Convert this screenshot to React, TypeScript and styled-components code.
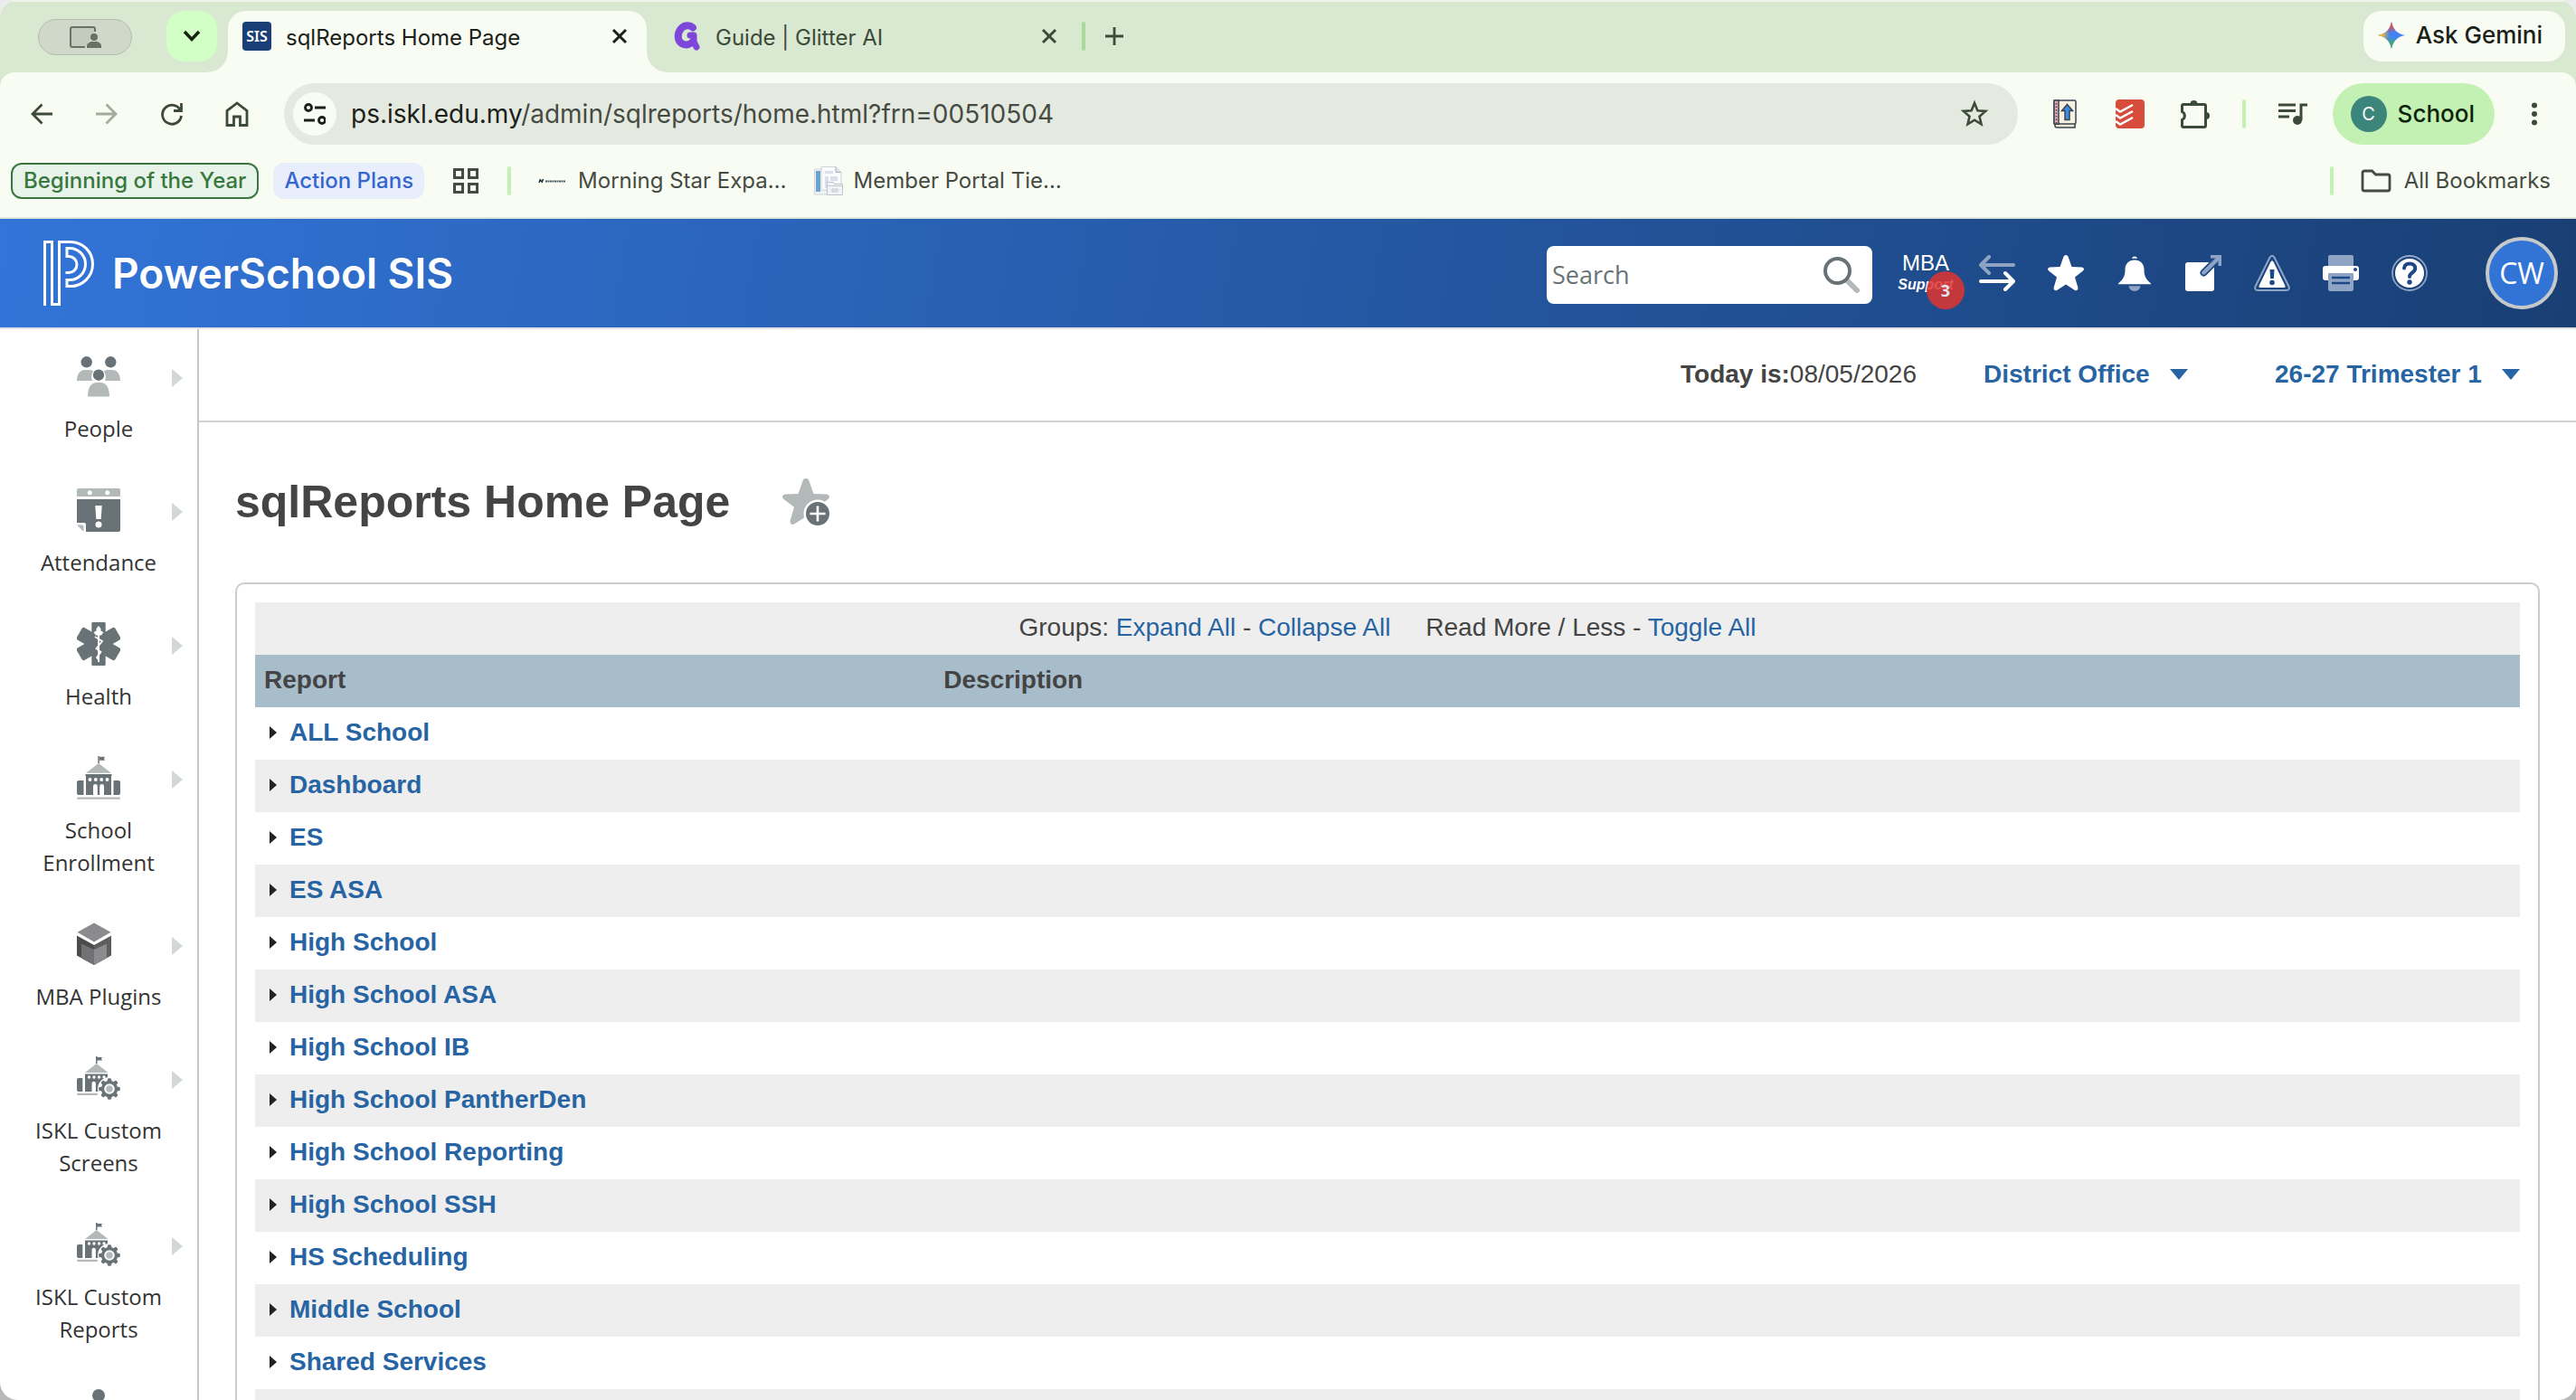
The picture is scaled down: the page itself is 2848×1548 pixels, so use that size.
import React from 'react';
import styled, { createGlobalStyle } from 'styled-components';

const ui = '"Inter", "Liberation Sans", sans-serif';
const arial = '"Liberation Sans", Arial, sans-serif';
const openSans = '"Open Sans", "Noto Sans", sans-serif';
const slate = '#697277';
const mist = '#b3b8b8';
const linkBlue = '#2764a3';
const frame = '#d9e8d1';
const chrome = '#f9fcf3';
const lime = '#c3f1b4';
const ink = '#3c4a3a';

const GlobalStyle = createGlobalStyle`
  * { box-sizing: border-box; }
  html { background: linear-gradient(#ececec, #b9b9b9); }
  body { margin: 0; font-family: ${arial}; }
  button, input, select { font: inherit; color: inherit; border: 0; padding: 0; margin: 0; background: none; }
  a { color: inherit; text-decoration: none; }
  svg { display: block; flex: none; }
`;

const Window = styled.div`
  display: flex;
  flex-direction: column;
  height: 100vh;
  overflow: hidden;
  border-radius: 20px;
  background: #fff;
`;

/* ---------- tab strip ---------- */

const TabStrip = styled.div`
  display: flex;
  flex: none;
  height: 80px;
  padding: 12px 12px 0 42px;
  background: ${frame};
  box-shadow: inset 0 2px 0 #eff4ec;
  font: 400 24px/32px ${ui};
`;

const ProfilePill = styled.button`
  display: flex;
  align-items: center;
  justify-content: center;
  width: 104px;
  height: 40px;
  margin: 9px 38px 0 0;
  border: 1px solid #b2bdac;
  border-radius: 20px;
  background: #d0d8ca;
  color: #697166;
`;

const TabSearch = styled.button`
  display: flex;
  align-items: center;
  justify-content: center;
  width: 56px;
  height: 56px;
  margin-right: 12px;
  border-radius: 20px;
  background: #d1ffc6;
  color: #16210f;
`;

const Tab = styled.div<{ $active?: boolean }>`
  position: relative;
  display: flex;
  align-items: center;
  gap: 16px;
  width: ${p => (p.$active ? '463px' : '481px')};
  padding: ${p => (p.$active ? '0 20px 12px 16px' : '0 26px 12px 30px')};
  border-radius: 20px 20px 0 0;
  background: ${p => (p.$active ? chrome : 'transparent')};
  color: ${p => (p.$active ? '#1b2118' : ink)};

  &::before, &::after {
    content: '';
    display: ${p => (p.$active ? 'block' : 'none')};
    position: absolute;
    bottom: 0;
    width: 22px;
    height: 22px;
  }
  &::before { right: 100%; background: radial-gradient(circle at 0 0, transparent 21px, ${chrome} 22px); }
  &::after { left: 100%; background: radial-gradient(circle at 100% 0, transparent 21px, ${chrome} 22px); }
`;

const TabTitle = styled.span`
  flex: 1;
  padding-top: 3px;
  white-space: nowrap;
`;

const SisIcon = styled.span`
  display: flex;
  align-items: center;
  justify-content: center;
  width: 32px;
  height: 32px;
  border-radius: 4px;
  background: #1a3f76;
  color: #fff;
  font: 600 16px/32px "Noto Sans", sans-serif;
`;

const PlainButton = styled.button`
  display: flex;
  align-items: center;
  justify-content: center;
`;

const Rule = styled.span<{ $color?: string }>`
  flex: none;
  width: 4px;
  height: 32px;
  border-radius: 2px;
  background: ${p => p.$color ?? lime};
`;

const StripRule = styled(Rule)`
  margin-top: 12px;
`;

const NewTab = styled(PlainButton)`
  width: 64px;
  height: 56px;
  color: ${ink};
`;

const Gemini = styled.button`
  display: flex;
  align-items: center;
  gap: 12px;
  height: 56px;
  margin-left: auto;
  padding: 0 25px 2px 16px;
  border-radius: 20px;
  background: ${chrome};
  color: #1b2118;
  font: 500 26px/32px ${ui};
`;

/* ---------- toolbar ---------- */

const ToolbarBack = styled.div`
  flex: none;
  background: ${frame};
`;

const Toolbar = styled.div`
  display: flex;
  align-items: center;
  padding: 12px 10px;
  border-radius: 16px 16px 0 0;
  background: ${chrome};
  color: ${ink};
  font: 400 28px/36px ${ui};
`;

const ToolButton = styled.button<{ $dim?: boolean }>`
  display: flex;
  align-items: center;
  justify-content: center;
  flex: none;
  width: 72px;
  height: 68px;
  opacity: ${p => (p.$dim ? 0.45 : 1)};
`;

const AddressBar = styled.div`
  display: flex;
  flex: 1;
  align-items: center;
  gap: 16px;
  min-width: 0;
  height: 68px;
  margin: 0 16px;
  padding: 0 32px 0 10px;
  border-radius: 34px;
  background: #e5eae0;
`;

const SiteInfo = styled(PlainButton)`
  flex: none;
  width: 48px;
  height: 48px;
  border-radius: 50%;
  background: ${chrome};
  color: #1b2118;
`;

const Url = styled.div`
  flex: 1;
  overflow: hidden;
  color: #454b42;
  white-space: nowrap;

  b { color: #1b2118; font-weight: 400; }
`;

const ToolRule = styled(Rule)`
  margin: 0 16px;
`;

const Profile = styled.button`
  display: flex;
  align-items: center;
  gap: 12px;
  height: 68px;
  margin: 0 8px;
  padding: 0 22px 0 20px;
  border-radius: 34px;
  background: ${lime};
  color: #0d2409;
  font: 500 26px/36px ${ui};
`;

const ProfileDot = styled.span`
  width: 40px;
  border-radius: 50%;
  background: #3b857a;
  color: #fff;
  font: 400 20px/40px ${ui};
`;

/* ---------- bookmarks ---------- */

const Bookmarks = styled.nav`
  display: flex;
  flex: none;
  align-items: center;
  height: 70px;
  padding: 0 28px 12px 12px;
  border-bottom: 2px solid #dde6d8;
  background: ${chrome};
  color: #454b42;
  font: 400 24px/32px ${ui};
`;

const GroupChip = styled.button<{ $open?: boolean }>`
  height: 40px;
  margin-right: 16px;
  padding: 0 12px;
  border: ${p => (p.$open ? '2px solid #38783e' : '0')};
  border-radius: 12px;
  background: ${p => (p.$open ? '#e8f3e9' : '#e9eefd')};
  color: ${p => (p.$open ? '#38783e' : '#3566cf')};
  font: 500 24px/32px ${ui};
  white-space: nowrap;
`;

const AppsButton = styled(PlainButton)`
  width: 60px;
  height: 40px;
  margin-right: 16px;
`;

const Bookmark = styled.a`
  display: flex;
  align-items: center;
  gap: 12px;
  margin-left: 30px;
  white-space: nowrap;
`;

const BookmarkRule = styled(Rule)<{ $push?: boolean }>`
  margin-left: ${p => (p.$push ? 'auto' : '0')};
`;

/* ---------- product header ---------- */

const Header = styled.header`
  display: flex;
  flex: none;
  align-items: center;
  height: 122px;
  padding: 0 20px 0 48px;
  border-bottom: 2px solid #e1e1e6;
  background: linear-gradient(100deg, #3274d8, #193f74);
  color: #fff;
`;

const Brand = styled.a`
  display: flex;
  align-items: center;
  gap: 18px;
  margin-right: auto;
  font: 600 46px/56px ${ui};
  white-space: nowrap;
`;

const SearchBox = styled.label`
  display: flex;
  align-items: center;
  width: 360px;
  height: 64px;
  margin: 4px 24px 0 0;
  padding: 0 14px 0 6px;
  border-radius: 8px;
  background: #fff;
`;

const SearchInput = styled.input`
  flex: 1;
  min-width: 0;
  outline: 0;
  color: ${slate};
  font: 400 27px/36px ${openSans};

  &::placeholder { color: ${slate}; opacity: 1; }
`;

const HeaderButton = styled.button`
  position: relative;
  display: flex;
  flex-direction: column;
  align-items: center;
  justify-content: center;
  width: 76px;
  height: 80px;
`;

const SupportButton = styled(HeaderButton)`
  padding-right: 6px;
`;

const MbaTop = styled.span`
  font: 400 24px/26px ${arial};
`;

const MbaBottom = styled.span`
  font: italic 700 16px/22px ${arial};
`;

const Badge = styled.span`
  position: absolute;
  right: -2px;
  bottom: 0;
  width: 42px;
  border-radius: 50%;
  background: rgba(222, 54, 48, 0.86);
  color: #dfe6f2;
  font: 700 18px/42px ${openSans};
`;

const Avatar = styled.button`
  width: 80px;
  height: 80px;
  margin-left: 46px;
  border: 4px solid #c6c9ca;
  border-radius: 50%;
  background: #3273d6;
  color: #fff;
  font: 400 32px/72px ${openSans};
`;

/* ---------- page ---------- */

const Body = styled.div`
  display: flex;
  flex: 1;
  min-height: 0;
`;

const Sidebar = styled.nav`
  flex: none;
  width: 220px;
  overflow: hidden;
  border-right: 2px solid #c3c7c8;
`;

const NavItem = styled.a`
  display: grid;
  grid-template-columns: 1fr 48px 1fr;
  align-items: center;
  padding: 28px 16px 20px;
  color: #333;
  font: 400 24px/36px ${openSans};
  text-align: center;
`;

const NavIcon = styled.span`
  grid-column: 2;
  height: 48px;
`;

const NavArrow = styled.span`
  justify-self: end;
  width: 0;
  margin-top: 4px;
  border: 10px solid transparent;
  border-left: 12px solid #d3d7d8;
  border-right: 0;
`;

const NavLabel = styled.span`
  grid-column: 1 / -1;
  padding-top: 16px;
`;

const Main = styled.main`
  flex: 1;
  min-width: 0;
  overflow: hidden;
  color: #444;
`;

const ContextBar = styled.div`
  display: flex;
  align-items: center;
  justify-content: flex-end;
  height: 103px;
  padding: 0 62px 2px 40px;
  border-bottom: 2px solid #d2d4d4;
  font: 400 28px/36px ${arial};
`;

const Picker = styled.label<{ $gap: number }>`
  display: grid;
  align-items: center;
  margin-left: ${p => p.$gap}px;
  color: ${linkBlue};

  select, svg { grid-area: 1 / 1; }
  svg { justify-self: end; pointer-events: none; }
`;

const PickerSelect = styled.select`
  appearance: none;
  padding-right: 42px;
  font-weight: 700;
`;

const Content = styled.section`
  padding: 58px 40px 0;
`;

const TitleRow = styled.div`
  display: flex;
  align-items: center;
  gap: 58px;
  height: 60px;
  margin-bottom: 59px;
`;

const Title = styled.h1`
  margin: 0;
  font: 700 50px/60px ${arial};
`;

const Panel = styled.div`
  padding: 20px;
  border: 2px solid #ccc;
  border-radius: 10px;
`;

const ReportTable = styled.table`
  width: 100%;
  border-collapse: collapse;
  table-layout: fixed;
  font: 400 28px/36px ${arial};
  text-align: left;

  col:first-child { width: 30%; }
`;

const Row = styled.tr<{ $tone?: 'gray' | 'head' }>`
  height: 58px;
  background: ${p => (p.$tone === 'gray' ? '#eee' : p.$tone === 'head' ? '#a8bdca' : '#fff')};
`;

const HeadCell = styled.th`
  padding: 0 10px 2px;
`;

const Cell = styled.td`
  padding: 0 16px 2px;
`;

const GroupCell = styled.td`
  padding: 0 10px 2px;
  text-align: center;
  white-space: pre;
`;

const TextLink = styled.a`
  color: ${linkBlue};
`;

const GroupToggle = styled.button`
  display: flex;
  align-items: center;
  gap: 14px;
  color: ${linkBlue};
  font: 700 28px/36px ${arial};
`;

/* ---------- drawings ---------- */

const line = { fill: 'none', stroke: 'currentColor' } as const;

const CloseIcon = () => (
  <svg width="20" height="20" viewBox="0 0 20 20" {...line} strokeWidth="3"><path d="M3 3l14 14M17 3L3 17" /></svg>
);

const GlitterIcon = () => (
  <svg width="30" height="32" viewBox="0 0 30 32" fill="none" stroke="#7d47d9" strokeLinecap="round" strokeLinejoin="round">
    <path d="M21 6.500C18 3.500 12 3 8.500 7C3 13 4 21 8.500 24C13 26.500 18 25.500 21 22" strokeWidth="8" />
    <path d="M18 15h4v7l3 6" strokeWidth="7" />
  </svg>
);

const GeminiIcon = () => (
  <svg width="30" height="30" viewBox="0 0 30 30">
    <defs>
      <radialGradient id="gR" gradientUnits="userSpaceOnUse" cx="14" cy="1" r="12"><stop offset=".3" stopColor="#e94b41" /><stop offset="1" stopColor="#e94b41" stopOpacity="0" /></radialGradient>
      <radialGradient id="gY" gradientUnits="userSpaceOnUse" cx="1" cy="14" r="12"><stop offset=".3" stopColor="#f2bd2c" /><stop offset="1" stopColor="#f2bd2c" stopOpacity="0" /></radialGradient>
      <radialGradient id="gG" gradientUnits="userSpaceOnUse" cx="13" cy="29" r="13"><stop offset=".3" stopColor="#3fae5c" /><stop offset="1" stopColor="#3fae5c" stopOpacity="0" /></radialGradient>
    </defs>
    {['#4384f5', 'url(#gG)', 'url(#gY)', 'url(#gR)'].map(f => (
      <path key={f} fill={f} d="M15 0C16.500 8.500 21.500 13.500 30 15C21.500 16.500 16.500 21.500 15 30C13.500 21.500 8.500 16.500 0 15C8.500 13.500 13.500 8.500 15 0z" />
    ))}
  </svg>
);

const NotebookIcon = () => (
  <svg width="28" height="32" viewBox="0 0 28 32" stroke="#3a4450" strokeWidth="1.500">
    <path d="M3 26v3a2 2 0 0 0 2 2h20v-4" fill="#efe6d2" />
    <rect x="2" y="1" width="24" height="26" rx="1.500" fill="#f8f0df" />
    <path d="M2 1h5v26H2z" fill="#e6a6b5" />
    <path d="M4.500 4v22" strokeDasharray="1.500 2" fill="none" />
    <path d="M16.500 5.500l6 7h-3.500v10h-5v-10h-3.500z" fill="#3b8ee8" />
  </svg>
);

const TodoistIcon = () => (
  <svg width="32" height="32" viewBox="0 0 32 32">
    <rect width="32" height="32" rx="4" fill="#d84c3c" />
    <path d="M0 10l5 3.500L19 6M0 17l5 3.500L19 13M0 24l5 3.500L19 20" fill="none" stroke="#fff" strokeWidth="2.400" />
  </svg>
);

const MemberIcon = () => (
  <svg width="32" height="32" viewBox="0 0 32 32">
    <path d="M.5 3h20v28H.5z" fill="#eef2f5" stroke="#ccd4da" />
    <path d="M2 5h5v23H2z" fill="#69a3d2" />
    <path d="M8 .5h16l6 6V26H8z" fill="#fafbfc" stroke="#cdd3d8" />
    <path d="M24 .5v6h6" fill="#dfe3e8" stroke="#aab2ba" />
    <path d="M12 5h9v3h-9zM12 11h4v13h-4zM18 11h8v5h-8z" fill="#dcdfea" />
    <path d="M14.500 17.500h7l1 2h9v12h-17z" fill="#f2f3f6" stroke="#bfc5cb" />
    <path d="M14.500 21.500h17M20 25h6v3h-6z" fill="#e0e3ea" stroke="#c4c9d0" />
  </svg>
);

const MorningStarIcon = () => (
  <svg width="32" height="8" viewBox="0 0 32 8"><path d="M1 6l1.500-4M4 6l1.500-4M2 4h3" stroke="#182e3c" strokeWidth="1.500" /><path d="M8 4.500h22" stroke="#4b5c66" strokeWidth="2" strokeDasharray="2 .5" /></svg>
);

const PowerSchoolLogo = () => (
  <svg width="58" height="72" viewBox="0 0 58 72" fill="none" stroke="#fff" strokeWidth="3">
    <path d="M1.500 72V1.500H9.500V70.500H17.500V1.500H30a24.500 24.500 0 0 1 0 49H26V43.500h3a17.500 17.500 0 0 0 0-35H26V17.500h2a9 9 0 0 1 0 18H24.500" />
  </svg>
);

const PeopleIcon = () => (
  <svg width="48" height="48" viewBox="0 0 48 48">
    <g fill={slate}><circle cx="10.700" cy="8.300" r="6.200" /><circle cx="37.300" cy="8.300" r="6.200" /></g>
    <g fill={mist}>
      <path d="M0 29C0 21 4 17 9 17h4c2 0 4 .5 5 1.500-2 3.500-2.500 7-1 10.500z" />
      <path d="M48 29c0-8-4-12-9-12h-4c-2 0-4 .5-5 1.500 2 3.500 2.500 7 1 10.500z" />
      <path d="M12 46.500C12 36 16 31 22 31h4c6 0 10 5 10 15.500z" />
    </g>
    <circle cx="24" cy="22.700" r="6.200" fill={slate} />
  </svg>
);

const AttendanceIcon = () => (
  <svg width="48" height="48" viewBox="0 0 48 48">
    <path d="M2 0h44a2 2 0 0 1 2 2v7H0V2a2 2 0 0 1 2-2z" fill={mist} />
    <path d="M0 12h48v34a2 2 0 0 1-2 2H10V40a2 2 0 0 0-2-2H0z" fill={slate} />
    <path d="M0 40.500h5.500a2 2 0 0 1 2 2V48z" fill={mist} />
    <g fill="#fff"><circle cx="14.300" cy="4.800" r="2.500" /><circle cx="33.700" cy="4.800" r="2.500" /><path d="M20.300 19h7.400l-1 15h-5.400z" /><circle cx="24" cy="40" r="3.500" /></g>
  </svg>
);

const HealthIcon = () => (
  <svg width="48" height="48" viewBox="0 0 48 48">
    <g fill={slate}>
      {[0, 60, 120].map(a => <rect key={a} x="16.300" y="-.5" width="15.400" height="49" rx="2.500" transform={`rotate(${a} 24 24)`} />)}
    </g>
    <path d="M24 12v32" stroke="#fff" strokeWidth="2" />
    <path d="M24 4l2.500 3v2.500l3 1.500-2.500 3.500h-6L18.500 11l3-1.500V7z" fill="#fff" />
    <path d="M20 16l8 5-6.500 8 5 4-4.500 6 2.500 3" fill="none" stroke="#fff" strokeWidth="1.800" />
  </svg>
);

const SchoolIcon = () => (
  <svg width="48" height="48" viewBox="0 0 48 48">
    <g fill={slate}>
      <path d="M23.300 0h1.500v8h-1.500zM25 .7h6l-1 2 1 2h-6z" />
      <path d="M9.500 20h29v2h-.5v21H10V22h-.5z" />
      <path d="M2 27h5.500v16H2a2 2 0 0 1-2-2V29a2 2 0 0 1 2-2zM40.500 27H46a2 2 0 0 1 2 2v12a2 2 0 0 1-2 2h-5.500z" />
    </g>
    <path d="M24 8l14 10.700H10z" fill={mist} />
    <rect y="45.500" width="48" height="2.200" rx="1" fill={mist} />
    <g fill="#fff">{[14.500, 20.800, 27.200, 33.500].map(x => <circle key={x} cx={x} cy="26" r="1.900" />)}<path d="M18 43V33.500a2.400 2.400 0 0 1 4.800 0V43zM25.200 43V33.500a2.400 2.400 0 0 1 4.800 0V43z" /></g>
  </svg>
);

const SchoolGearIcon = () => (
  <svg width="48" height="48" viewBox="0 0 48 48">
    <g fill={slate}>
      <path d="M21 0h1.500v8H21zM22.500 1H28l-1 1.500 1 2h-5.500z" />
      <path d="M9 19.500h25V39H9z" />
      <path d="M2 24h4.300v15H2a2 2 0 0 1-2-2V26a2 2 0 0 1 2-2z" />
    </g>
    <path d="M21.700 8l12.800 10H9z" fill={mist} />
    <rect y="40.700" width="23" height="2.200" rx="1" fill={mist} />
    <g fill="#fff">{[13.500, 19, 24.500, 30].map(x => <circle key={x} cx={x} cy="23" r="1.700" />)}<path d="M16.500 39V30a2.200 2.200 0 0 1 4.400 0V39z" /><circle cx="36" cy="36" r="13" /></g>
    <g fill={slate}>{[0, 45, 90, 135].map(a => <rect key={a} x="33.800" y="24.200" width="4.400" height="23.600" rx="1.500" transform={`rotate(${a} 36 36)`} />)}<circle cx="36" cy="36" r="9.200" /></g>
    <circle cx="36" cy="36" r="5.800" fill="#fff" />
    <circle cx="36" cy="36" r="3.700" fill={mist} />
  </svg>
);

const CubeIcon = () => (
  <svg width="48" height="48" viewBox="0 0 48 48">
    <path d="M19 .5l18.500 10.200L19 21.500.5 10.700z" fill="#8b8b8d" />
    <path d="M0 14.500L19 25v22L0 36.500z" fill="#4c4c4e" />
    <path d="M38 14.500L19 25v22l19-10.500z" fill="#5d5d5f" />
    <path d="M5 23.500l14 6.500v17L5 39.500z" fill="#727274" />
    <path d="M33 23.500L19 30v17l14-7.500z" fill="#8b8b8d" />
  </svg>
);

const PersonIcon = () => (
  <svg width="48" height="48" viewBox="0 0 48 48"><circle cx="24" cy="7" r="7" fill={slate} /><path d="M10 34c0-12 5-18 11-18h6c6 0 11 6 11 18z" fill={mist} /></svg>
);

const veil = 'rgba(255,255,255,.5)';
const navy = '#1d4888';
const starPath = 'M20 0c1.500 0 2.200 1 2.700 2.200L26.500 13l11 .4c2.500.2 3.300 2.600 1.400 4.200L30 24.500l3.300 11.300c.6 2.600-1.500 4.300-3.700 2.900L20 32.500l-9.600 6.200c-2.200 1.400-4.300-.3-3.700-2.900L10 24.500 1.100 17.600c-1.900-1.600-1.100-4 1.400-4.200l11-.4 3.800-10.800C17.800 1 18.500 0 20 0z';

const Icon40 = ({ children }: { children: React.ReactNode }) => <svg width="40" height="40" viewBox="0 0 40 40">{children}</svg>;

const headerIcons: { label: string; icon: React.ReactNode }[] = [
  { label: 'Switch', icon: (
    <Icon40><g fill="none" strokeWidth="4" strokeLinecap="round" strokeLinejoin="round">
      <path d="M38 11H2M11 2L2 11l9 9" stroke="#8fa4c5" /><path d="M2 29h36M29 20l9 9-9 9" stroke="#fff" />
    </g></Icon40>) },
  { label: 'Favorites', icon: <Icon40><path d={starPath} fill="#fff" /></Icon40> },
  { label: 'Notifications', icon: (
    <Icon40><path d="M17 3.800a3.100 3.100 0 0 1 6 0zM20 5.500c6.500 0 10.500 4.500 10.500 10.500 0 8 2.500 11 7.500 15.500v.8H2v-.8C7 27 9.500 24 9.500 16 9.500 10 13.500 5.500 20 5.500z" fill="#fff" /><path d="M13.500 34.300h13a6.500 5.700 0 0 1-13 0z" fill={veil} /></Icon40>) },
  { label: 'Open in new window', icon: (
    <Icon40><rect y="8" width="32" height="32" rx="3" fill="#fff" />
      <path d="M20.500 19.500L34 6" stroke={navy} strokeWidth="8" strokeLinecap="round" /><path d="M20.500 19.500L37 3" stroke="#8fa4c5" strokeWidth="4.500" strokeLinecap="round" /><path d="M28 0h12v12h-3.500V3.500H28z" fill="#8fa4c5" /></Icon40>) },
  { label: 'Alerts', icon: (
    <Icon40><path d="M20 1c1.200 0 2 .8 2.600 1.800l16 32.200c.8 2-.2 4-2.600 4H4c-2.400 0-3.400-2-2.600-4l16-32.200C18 1.800 18.800 1 20 1z" fill="none" stroke="#8fa4c5" strokeWidth="2" />
      <path d="M20 6.500c.8 0 1.300.5 1.700 1.200L34.500 34c.4 1.200-.2 2-1.500 2H7c-1.300 0-1.900-.8-1.500-2L18.300 7.700c.4-.7.9-1.200 1.700-1.200z" fill="#fff" />
      <path d="M17.500 16h5l-.6 10h-3.800z" fill={navy} /><circle cx="20" cy="30.500" r="2.800" fill={navy} /></Icon40>) },
  { label: 'Print', icon: (
    <Icon40><path d="M8 0h24a2 2 0 0 1 2 2v10H6V2a2 2 0 0 1 2-2z" fill="#8fa4c5" /><rect y="12" width="40" height="16" rx="3" fill="#fff" />
      <path d="M6 20h28v18a2 2 0 0 1-2 2H8a2 2 0 0 1-2-2z" fill="#8fa4c5" /><path d="M10 25h20M10 31h20" stroke={navy} strokeWidth="2.400" /><circle cx="36" cy="16" r="2" fill={navy} /></Icon40>) },
  { label: 'Help', icon: (
    <Icon40><circle cx="20" cy="20" r="19" fill="none" stroke="#8fa4c5" strokeWidth="1.800" /><circle cx="20" cy="20" r="16" fill="#fff" />
      <path d="M14 14.500c.5-3.500 3-5 6-5 3.500 0 6.200 2 6.200 5.200 0 4.800-6.200 4.500-6.200 9.300" fill="none" stroke={navy} strokeWidth="4" strokeLinecap="round" /><circle cx="20" cy="30" r="2.700" fill={navy} /></Icon40>) },
];

const DownTriangle = () => <svg width="20" height="12" viewBox="0 0 20 12"><path d="M0 0h20L10 12z" fill={linkBlue} /></svg>;
const RightTriangle = () => <svg width="8" height="14" viewBox="0 0 8 14"><path d="M0 0l8 7-8 7z" fill="#222" /></svg>;

const navItems: { label: string; icon: React.ReactNode }[] = [
  { label: 'People', icon: <PeopleIcon /> },
  { label: 'Attendance', icon: <AttendanceIcon /> },
  { label: 'Health', icon: <HealthIcon /> },
  { label: 'School Enrollment', icon: <SchoolIcon /> },
  { label: 'MBA Plugins', icon: <CubeIcon /> },
  { label: 'ISKL Custom Screens', icon: <SchoolGearIcon /> },
  { label: 'ISKL Custom Reports', icon: <SchoolGearIcon /> },
];

const groups = [
  'ALL School', 'Dashboard', 'ES', 'ES ASA', 'High School', 'High School ASA', 'High School IB',
  'High School PantherDen', 'High School Reporting', 'High School SSH', 'HS Scheduling', 'Middle School', 'Shared Services',
];

/* ---------- app ---------- */

const BrowserChrome = () => (
  <>
    <TabStrip>
      <ProfilePill aria-label="Shared screen">
        <svg width="36" height="26" viewBox="0 0 36 26">
          <path d="M29 7V4a2 2 0 0 0-2-2H4a2 2 0 0 0-2 2v18a2 2 0 0 0 2 2h14" fill="#c2cbbd" stroke="currentColor" strokeWidth="2" />
          <circle cx="28" cy="13" r="4" fill="currentColor" /><path d="M20 25v-2c0-3 3-5 6-5h4c3 0 6 2 6 5v2z" fill="currentColor" />
        </svg>
      </ProfilePill>
      <TabSearch aria-label="Search tabs">
        <svg width="20" height="14" viewBox="0 0 20 14" {...line} strokeWidth="3.500"><path d="M2 2l8 8.500L18 2" /></svg>
      </TabSearch>
      <Tab $active>
        <SisIcon>SIS</SisIcon>
        <TabTitle>sqlReports Home Page</TabTitle>
        <PlainButton aria-label="Close tab"><CloseIcon /></PlainButton>
      </Tab>
      <Tab>
        <GlitterIcon />
        <TabTitle>Guide | Glitter AI</TabTitle>
        <PlainButton aria-label="Close tab"><CloseIcon /></PlainButton>
      </Tab>
      <StripRule $color="#a9d89b" />
      <NewTab aria-label="New tab">
        <svg width="20" height="20" viewBox="0 0 20 20" {...line} strokeWidth="2.800"><path d="M10 0v20M0 10h20" /></svg>
      </NewTab>
      <Gemini><GeminiIcon />Ask Gemini</Gemini>
    </TabStrip>

    <ToolbarBack>
      <Toolbar>
        <ToolButton aria-label="Back">
          <svg width="24" height="24" viewBox="0 0 24 24" {...line} strokeWidth="2.800"><path d="M24 12H2M12.500 1.500L2 12l10.500 10.500" /></svg>
        </ToolButton>
        <ToolButton $dim aria-label="Forward">
          <svg width="24" height="24" viewBox="0 0 24 24" {...line} strokeWidth="2.800"><path d="M0 12h22M11.500 1.500L22 12 11.500 22.500" /></svg>
        </ToolButton>
        <ToolButton aria-label="Reload">
          <svg width="26" height="26" viewBox="0 0 26 26" {...line} strokeWidth="2.800"><path d="M22.500 9A10.500 10.500 0 1 0 23.500 15M23.500 1v8.500H15" /></svg>
        </ToolButton>
        <ToolButton aria-label="Home">
          <svg width="26" height="28" viewBox="0 0 26 28" {...line} strokeWidth="2.800"><path d="M2 26.500V10.500L13 2l11 8.500v16h-7.500V17h-7v9.500z" /></svg>
        </ToolButton>
        <AddressBar>
          <SiteInfo aria-label="Site information">
            <svg width="24" height="24" viewBox="0 0 24 24" {...line} strokeWidth="2.800"><circle cx="5" cy="5" r="3.500" /><path d="M12 5h12M0 19h12" /><circle cx="20" cy="19" r="3.500" /></svg>
          </SiteInfo>
          <Url><b>ps.iskl.edu.my</b>/admin/sqlreports/home.html?frn=00510504</Url>
          <PlainButton aria-label="Bookmark this page">
            <svg width="32" height="32" viewBox="0 0 32 32" {...line} strokeWidth="2.600"><path d="M16 4l3.400 8.200 8.800.7-6.700 5.800 2 8.600L16 22.700l-7.500 4.600 2-8.600-6.700-5.800 8.800-.7z" /></svg>
          </PlainButton>
        </AddressBar>
        <ToolButton aria-label="Notebook extension"><NotebookIcon /></ToolButton>
        <ToolButton aria-label="Todoist"><TodoistIcon /></ToolButton>
        <ToolButton aria-label="Extensions">
          <svg width="34" height="34" viewBox="0 0 34 34" {...line} strokeWidth="3">
            <path d="M4 6.500h23a1.500 1.500 0 0 1 1.500 1.500v22a1.500 1.500 0 0 1-1.500 1.500H4A1.500 1.500 0 0 1 2.500 30v-6.500a5 5 0 0 0 0-9V8A1.500 1.500 0 0 1 4 6.500z" />
            <path d="M11.500 6a4 4 0 0 1 8 0zM29 15a4 4 0 0 1 0 8z" fill="currentColor" stroke="none" />
          </svg>
        </ToolButton>
        <ToolRule />
        <ToolButton aria-label="Media controls">
          <svg width="32" height="26" viewBox="0 0 32 26" {...line} strokeWidth="3"><path d="M0 3h19M0 9.500h19M0 16h12M32 3h-7v17" /><circle cx="21" cy="20" r="5" fill="currentColor" stroke="none" /></svg>
        </ToolButton>
        <Profile><ProfileDot>C</ProfileDot>School</Profile>
        <ToolButton aria-label="Menu">
          <svg width="8" height="26" viewBox="0 0 8 26" fill="currentColor"><circle cx="4" cy="3.500" r="3" /><circle cx="4" cy="13" r="3" /><circle cx="4" cy="22.500" r="3" /></svg>
        </ToolButton>
      </Toolbar>
    </ToolbarBack>

    <Bookmarks aria-label="Bookmarks">
      <GroupChip $open>Beginning of the Year</GroupChip>
      <GroupChip>Action Plans</GroupChip>
      <AppsButton aria-label="Apps">
        <svg width="28" height="28" viewBox="0 0 28 28" {...line} strokeWidth="3"><path d="M1.500 1.500h9v9h-9zM17.500 1.500h9v9h-9zM1.500 17.500h9v9h-9zM17.500 17.500h9v9h-9z" /></svg>
      </AppsButton>
      <BookmarkRule />
      <Bookmark href="#"><MorningStarIcon />Morning Star Expa…</Bookmark>
      <Bookmark href="#"><MemberIcon />Member Portal Tie…</Bookmark>
      <BookmarkRule $push />
      <Bookmark href="#">
        <svg width="36" height="26" viewBox="0 0 36 26" {...line} strokeWidth="2.800"><path d="M4 2h8.500l4 4H30a2 2 0 0 1 2 2v14a2 2 0 0 1-2 2H4a2 2 0 0 1-2-2V4a2 2 0 0 1 2-2z" /></svg>
        All Bookmarks
      </Bookmark>
    </Bookmarks>
  </>
);

export default function App() {
  return (
    <Window>
      <GlobalStyle />
      <BrowserChrome />
      <Header>
        <Brand href="#"><PowerSchoolLogo />PowerSchool SIS</Brand>
        <SearchBox>
          <SearchInput type="text" placeholder="Search" aria-label="Search" />
          <svg width="40" height="40" viewBox="0 0 40 40" fill="none"><path d="M26.500 26.500L37 37" stroke={mist} strokeWidth="6" strokeLinecap="round" /><circle cx="15.500" cy="15.500" r="13.500" stroke={slate} strokeWidth="4" /></svg>
        </SearchBox>
        <SupportButton>
          <MbaTop>MBA</MbaTop>
          <MbaBottom>Support</MbaBottom>
          <Badge>3</Badge>
        </SupportButton>
        {headerIcons.map(i => <HeaderButton key={i.label} aria-label={i.label}>{i.icon}</HeaderButton>)}
        <Avatar>CW</Avatar>
      </Header>
      <Body>
        <Sidebar aria-label="Main">
          {navItems.map(n => (
            <NavItem key={n.label} href="#">
              <NavIcon>{n.icon}</NavIcon>
              <NavArrow />
              <NavLabel>{n.label}</NavLabel>
            </NavItem>
          ))}
          <NavItem href="#" aria-label="More"><NavIcon><PersonIcon /></NavIcon><NavArrow /></NavItem>
        </Sidebar>
        <Main>
          <ContextBar>
            <strong>Today is:</strong><span>08/05/2026</span>
            <Picker $gap={74}>
              <PickerSelect aria-label="School"><option>District Office</option></PickerSelect>
              <DownTriangle />
            </Picker>
            <Picker $gap={96}>
              <PickerSelect aria-label="Term"><option>26-27 Trimester 1</option></PickerSelect>
              <DownTriangle />
            </Picker>
          </ContextBar>
          <Content>
            <TitleRow>
              <Title>sqlReports Home Page</Title>
              <PlainButton aria-label="Add to favorites">
                <svg width="52" height="52" viewBox="0 0 52 52">
                  <path d={starPath} fill={mist} transform="scale(1.300)" />
                  <circle cx="39" cy="39" r="15.500" fill="#fff" /><circle cx="39" cy="39" r="13" fill={slate} />
                  <path d="M39 31.500v15M31.500 39h15" stroke="#fff" strokeWidth="2.600" strokeLinecap="round" />
                </svg>
              </PlainButton>
            </TitleRow>
            <Panel>
              <ReportTable>
                <colgroup><col /><col /></colgroup>
                <thead>
                  <Row $tone="gray">
                    <GroupCell colSpan={2}>
                      Groups: <TextLink href="#">Expand All</TextLink> - <TextLink href="#">Collapse All</TextLink>
                      {'\u00a0\u00a0\u00a0\u00a0 '}Read More / Less - <TextLink href="#">Toggle All</TextLink>
                    </GroupCell>
                  </Row>
                  <Row $tone="head"><HeadCell>Report</HeadCell><HeadCell>Description</HeadCell></Row>
                </thead>
                <tbody>
                  {groups.map((g, i) => (
                    <Row key={g} $tone={i % 2 ? 'gray' : undefined}>
                      <Cell colSpan={2}><GroupToggle aria-expanded={false}><RightTriangle />{g}</GroupToggle></Cell>
                    </Row>
                  ))}
                  <Row $tone="gray"><Cell colSpan={2} /></Row>
                </tbody>
              </ReportTable>
            </Panel>
          </Content>
        </Main>
      </Body>
    </Window>
  );
}
